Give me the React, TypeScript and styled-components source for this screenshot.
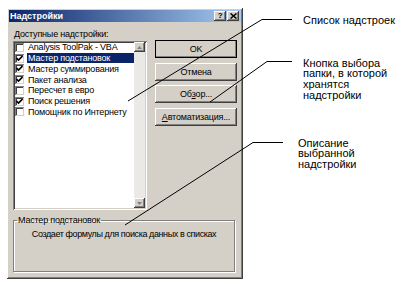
import * as React from "react";
import styled, { createGlobalStyle } from "styled-components";

const Global = createGlobalStyle`
  html, body { margin: 0; padding: 0; background: #fff; }
`;

const ui = `font-family: "Liberation Sans", Arial, sans-serif;`;
const raised = `box-shadow: inset -1px -1px #404040, inset 1px 1px #fff, inset -2px -2px #808080, inset 2px 2px #d4d0c8;`;
const sunken = `box-shadow: inset 1px 1px #808080, inset -1px -1px #fff, inset 2px 2px #404040, inset -2px -2px #d4d0c8;`;

const Page = styled.div`
  position: relative;
  width: 401px;
  height: 284px;
  box-sizing: border-box;
  padding: 8px 0 0 7px;
  display: flex;
  align-items: flex-start;
  background: #fff;
  overflow: hidden;
`;

const Dialog = styled.div`
  ${ui}
  width: 236px;
  height: 271px;
  box-sizing: border-box;
  padding: 2px;
  background: #d4d0c8;
  ${raised}
  display: flex;
  flex-direction: column;
  font-size: 9px;
  letter-spacing: -0.2px;
  color: #000;
`;

const TitleBar = styled.div`
  height: 12px;
  display: flex;
  align-items: center;
  padding: 0 2px 0 1px;
  background: linear-gradient(to right, #0a246a, #a6caf0);
`;

const Title = styled.div`
  flex: 1;
  color: #fff;
  font-weight: bold;
  font-size: 9px;
  letter-spacing: 0;
`;

const CaptionButton = styled.div`
  width: 12px;
  height: 10px;
  box-sizing: border-box;
  margin-left: 1px;
  background: #d4d0c8;
  ${raised}
  display: flex;
  align-items: center;
  justify-content: center;
  font-weight: bold;
  font-size: 8px;
  line-height: 1;
`;

const Body = styled.div`
  flex: 1;
  display: flex;
  flex-direction: column;
  padding: 6px 4px 0 4px;
`;

const TopRow = styled.div`
  display: flex;
  justify-content: space-between;
`;

const ListColumn = styled.div`
  width: 134px;
  display: flex;
  flex-direction: column;
`;

const Label = styled.div`
  line-height: 12px;
  height: 12px;
  padding-left: 1px;
`;

const ListBox = styled.div`
  margin-top: 1px;
  height: 169px;
  box-sizing: border-box;
  padding: 1px 2px 2px 2px;
  background: #fff;
  ${sunken}
  display: flex;
`;

const Items = styled.div`
  flex: 1;
  display: flex;
  flex-direction: column;
`;

const Item = styled.div`
  height: 10.75px;
  display: flex;
  align-items: center;
  white-space: nowrap;
`;

const Check = styled.div`
  width: 9px;
  height: 9px;
  box-sizing: border-box;
  margin: 0 3px 0 0;
  background: #fff;
  box-shadow: inset 1px 1px #808080, inset -1px -1px #d4d0c8, inset 2px 2px #404040;
  display: flex;
  align-items: center;
  justify-content: center;
`;

const ItemText = styled.div<{ selected: boolean }>`
  flex: 1;
  height: 10px;
  line-height: 10px;
  padding-left: 1px;
  background: ${({ selected }) => (selected ? "#0a246a" : "transparent")};
  color: ${({ selected }) => (selected ? "#fff" : "#000")};
`;

const ScrollBar = styled.div`
  width: 11px;
  display: flex;
  flex-direction: column;
  justify-content: space-between;
  background: #ebe9e5;
`;

const Arrow = styled.div`
  width: 11px;
  height: 10px;
  box-sizing: border-box;
  background: #d4d0c8;
  ${raised}
  display: flex;
  align-items: center;
  justify-content: center;
`;

const ButtonColumn = styled.div`
  width: 82px;
  padding-top: 12px;
  display: flex;
  flex-direction: column;
  gap: 4.5px;
`;

const Button = styled.div<{ isDefault?: boolean }>`
  height: 18px;
  box-sizing: border-box;
  background: #d4d0c8;
  ${raised}
  outline: ${({ isDefault }) => (isDefault ? "1px solid #000" : "none")};
  outline-offset: -1px;
  display: flex;
  align-items: center;
  justify-content: center;
`;

const GroupBox = styled.fieldset`
  margin: 5px 2px 0 0;
  padding: 3px 0 0 0;
  height: 57px;
  box-sizing: border-box;
  border: 1px solid #808080;
  box-shadow: inset 1px 1px #fff, 1px 1px #fff;
`;

const Legend = styled.legend`
  padding: 0 1px;
  margin-left: 3px;
  line-height: 11px;
  font-size: 9px;
`;

const Description = styled.div`
  text-align: center;
  line-height: 11px;
  letter-spacing: -0.4px;
`;

const Notes = styled.div`
  ${ui}
  margin-left: 54px;
  display: flex;
  flex-direction: column;
  font-size: 11px;
  line-height: 10.7px;
  color: #000;
`;

const Note = styled.div<{ top: number; indent: number }>`
  margin-top: ${({ top }) => top}px;
  padding-left: ${({ indent }) => indent}px;
  white-space: nowrap;
`;

const Leaders = styled.svg`
  position: absolute;
  left: 0;
  top: 0;
  pointer-events: none;
`;

const items = [
  { name: "Analysis ToolPak - VBA", on: false },
  { name: "Мастер подстановок", on: true },
  { name: "Мастер суммирования", on: true },
  { name: "Пакет анализа", on: true },
  { name: "Пересчет в евро", on: false },
  { name: "Поиск решения", on: true },
  { name: "Помощник по Интернету", on: false },
];

const Tick = () => (
  <svg width="7" height="7" viewBox="0 0 7 7">
    <path d="M0.5 3 L2.5 5 L6.5 1" stroke="#000" strokeWidth="1.6" fill="none" />
  </svg>
);

export default function App() {
  return (
    <Page>
      <Global />
      <Dialog>
        <TitleBar>
          <Title>Надстройки</Title>
          <CaptionButton>?</CaptionButton>
          <CaptionButton>
            <svg width="7" height="6" viewBox="0 0 7 6">
              <path d="M0.5 0.5 L6.5 5.5 M6.5 0.5 L0.5 5.5" stroke="#000" strokeWidth="1.5" />
            </svg>
          </CaptionButton>
        </TitleBar>
        <Body>
          <TopRow>
            <ListColumn>
              <Label>Доступные надстройки:</Label>
              <ListBox>
                <Items>
                  {items.map((it, i) => (
                    <Item key={it.name}>
                      <Check>{it.on && <Tick />}</Check>
                      <ItemText selected={i === 1}>{it.name}</ItemText>
                    </Item>
                  ))}
                </Items>
                <ScrollBar>
                  <Arrow>
                    <svg width="5" height="3" viewBox="0 0 5 3"><path d="M2.5 0 L5 3 L0 3 Z" fill="#808080" /></svg>
                  </Arrow>
                  <Arrow>
                    <svg width="5" height="3" viewBox="0 0 5 3"><path d="M0 0 L5 0 L2.5 3 Z" fill="#808080" /></svg>
                  </Arrow>
                </ScrollBar>
              </ListBox>
            </ListColumn>
            <ButtonColumn>
              <Button isDefault>OK</Button>
              <Button>Отмена</Button>
              <Button>Об<u>з</u>ор...</Button>
              <Button><u>А</u>втоматизация...</Button>
            </ButtonColumn>
          </TopRow>
          <GroupBox>
            <Legend>Мастер подстановок</Legend>
            <Description>Создает формулы для поиска данных в списках</Description>
          </GroupBox>
        </Body>
      </Dialog>
      <Notes>
        <Note top={6.5} indent={6}>Список надстроек</Note>
        <Note top={32.4} indent={6}>
          Кнопка выбора<br />папки, в которой<br />хранятся<br />надстройки
        </Note>
        <Note top={37.2} indent={1}>
          Описание<br />выбранной<br />надстройки
        </Note>
      </Notes>
      <Leaders width="401" height="284">
        <polyline points="292,19.5 262,19.5 128,101" fill="none" stroke="#000" strokeWidth="1" />
        <polyline points="292,61.5 267,61.5 210,102" fill="none" stroke="#000" strokeWidth="1" />
        <polyline points="283,142.5 253,142.5 125,225" fill="none" stroke="#000" strokeWidth="1" />
      </Leaders>
    </Page>
  );
}
